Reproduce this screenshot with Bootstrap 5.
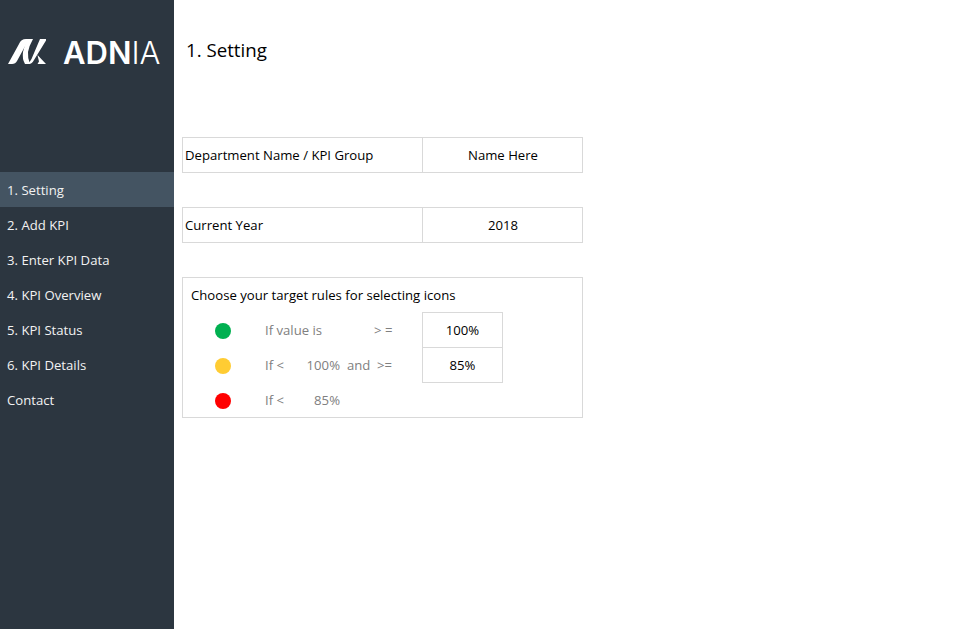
<!DOCTYPE html>
<html lang="en">
<head>
<meta charset="utf-8">
<title>1. Setting</title>
<link href="https://cdn.jsdelivr.net/npm/bootstrap@5.3.0/dist/css/bootstrap.min.css" rel="stylesheet">
<style>
html,body{height:100%;}
body{margin:0;background:#fff;color:#000;font-family:"Open Sans","Noto Sans",sans-serif;font-size:13.15px;line-height:1.2;overflow:hidden;}
.shell{width:965px;height:629px;}
.side{width:174px;flex:none;background:#2c3640;color:#fff;}
.logo-wrap{height:172px;padding:38px 0 0 8px;}
.logo-txt{font-family:Inter,"Liberation Sans",sans-serif;font-size:31px;line-height:30px;letter-spacing:0;color:#fff;margin-left:17px;}
.logo-txt b{font-weight:600;}
.logo-txt i{font-style:normal;font-weight:300;}
.menu-row{height:35px;padding:2px 0 0 7px;display:flex;align-items:center;color:#f2f2f2;text-decoration:none;}
.menu-row.on{background:#445462;}
.body-pane{padding:0 0 0 8px;flex:1;}
.pg-title{height:137px;padding:39px 0 0 4px;font-size:18.7px;line-height:22px;margin:0;font-weight:400;}
.sheet-row{width:401px;height:36px;border:1px solid #d9d9d9;display:flex;}
.lbl{width:240px;padding:2px 0 0 2px;border-right:1px solid #d9d9d9;display:flex;align-items:center;}
.val{flex:1;display:flex;align-items:center;justify-content:center;padding:2px 0 0 1px;}
.gap-sheet{margin-bottom:34px;}
.rule-box{width:401px;height:141px;border:1px solid #d9d9d9;}
.rule-head{height:34px;padding:2px 0 0 8px;display:flex;align-items:center;}
.rule-row{height:35px;display:flex;align-items:center;color:#808080;}
.dot{width:16px;height:16px;border-radius:50%;margin:3px 0 0 32px;flex:none;}
.t1{margin-left:34px;width:24px;flex:none;white-space:nowrap;padding-top:2px;}
.t2{width:51px;flex:none;text-align:right;padding-top:2px;}
.t3{margin-left:7px;width:30px;flex:none;padding-top:2px;}
.t4{width:45px;flex:none;padding-top:2px;white-space:nowrap;}
.t4.shift{text-indent:-3px;}
.cellv{width:81px;height:36px;flex:none;align-self:flex-start;border:1px solid #d9d9d9;display:flex;align-items:center;justify-content:center;color:#000;padding-top:2px;}
</style>
</head>
<body>
<div class="shell d-flex">
  <nav class="side">
    <div class="logo-wrap d-flex align-items-start">
      <svg width="38" height="28" viewBox="0 0 38 28" aria-hidden="true"><g fill="#fff"><path d="M0 26 11 6Q13 1 18 1H21L9 23Q7.500 26 4 26Z"/><path d="M20 1H25Q21 8 20 14Q19.500 20 22 26H17Q14 21 15 14Q16 8 20 1Z"/><path d="M32 1H39L26 22Q24 26 21 26L20 25Q22 24 23.500 21Z"/><path d="M29.500 17 38 26H29.500L31 23.500Z"/></g></svg>
      <div class="logo-txt"><b>ADN</b><i>IA</i></div>
    </div>
    <a class="menu-row on" href="#">1. Setting</a>
    <a class="menu-row" href="#">2. Add KPI</a>
    <a class="menu-row" href="#">3. Enter KPI Data</a>
    <a class="menu-row" href="#">4. KPI Overview</a>
    <a class="menu-row" href="#">5. KPI Status</a>
    <a class="menu-row" href="#">6. KPI Details</a>
    <a class="menu-row" href="#">Contact</a>
  </nav>
  <main class="body-pane">
    <h1 class="pg-title">1. Setting</h1>
    <div class="sheet-row gap-sheet"><div class="lbl">Department Name / KPI Group</div><div class="val">Name Here</div></div>
    <div class="sheet-row gap-sheet"><div class="lbl">Current Year</div><div class="val">2018</div></div>
    <div class="rule-box">
      <div class="rule-head">Choose your target rules for selecting icons</div>
      <div class="rule-row"><span class="dot" style="background:#00b050"></span><span class="t1">If value is</span><span class="t2"></span><span class="t3"></span><span class="t4 shift">&gt; =</span><div class="cellv">100%</div></div>
      <div class="rule-row"><span class="dot" style="background:#ffcc33"></span><span class="t1">If &lt;</span><span class="t2">100%</span><span class="t3">and</span><span class="t4">&gt;=</span><div class="cellv">85%</div></div>
      <div class="rule-row"><span class="dot" style="background:#ff0000"></span><span class="t1">If &lt;</span><span class="t2">85%</span></div>
    </div>
  </main>
</div>
<script src="https://cdn.jsdelivr.net/npm/bootstrap@5.3.0/dist/js/bootstrap.bundle.min.js"></script>
</body>
</html>
